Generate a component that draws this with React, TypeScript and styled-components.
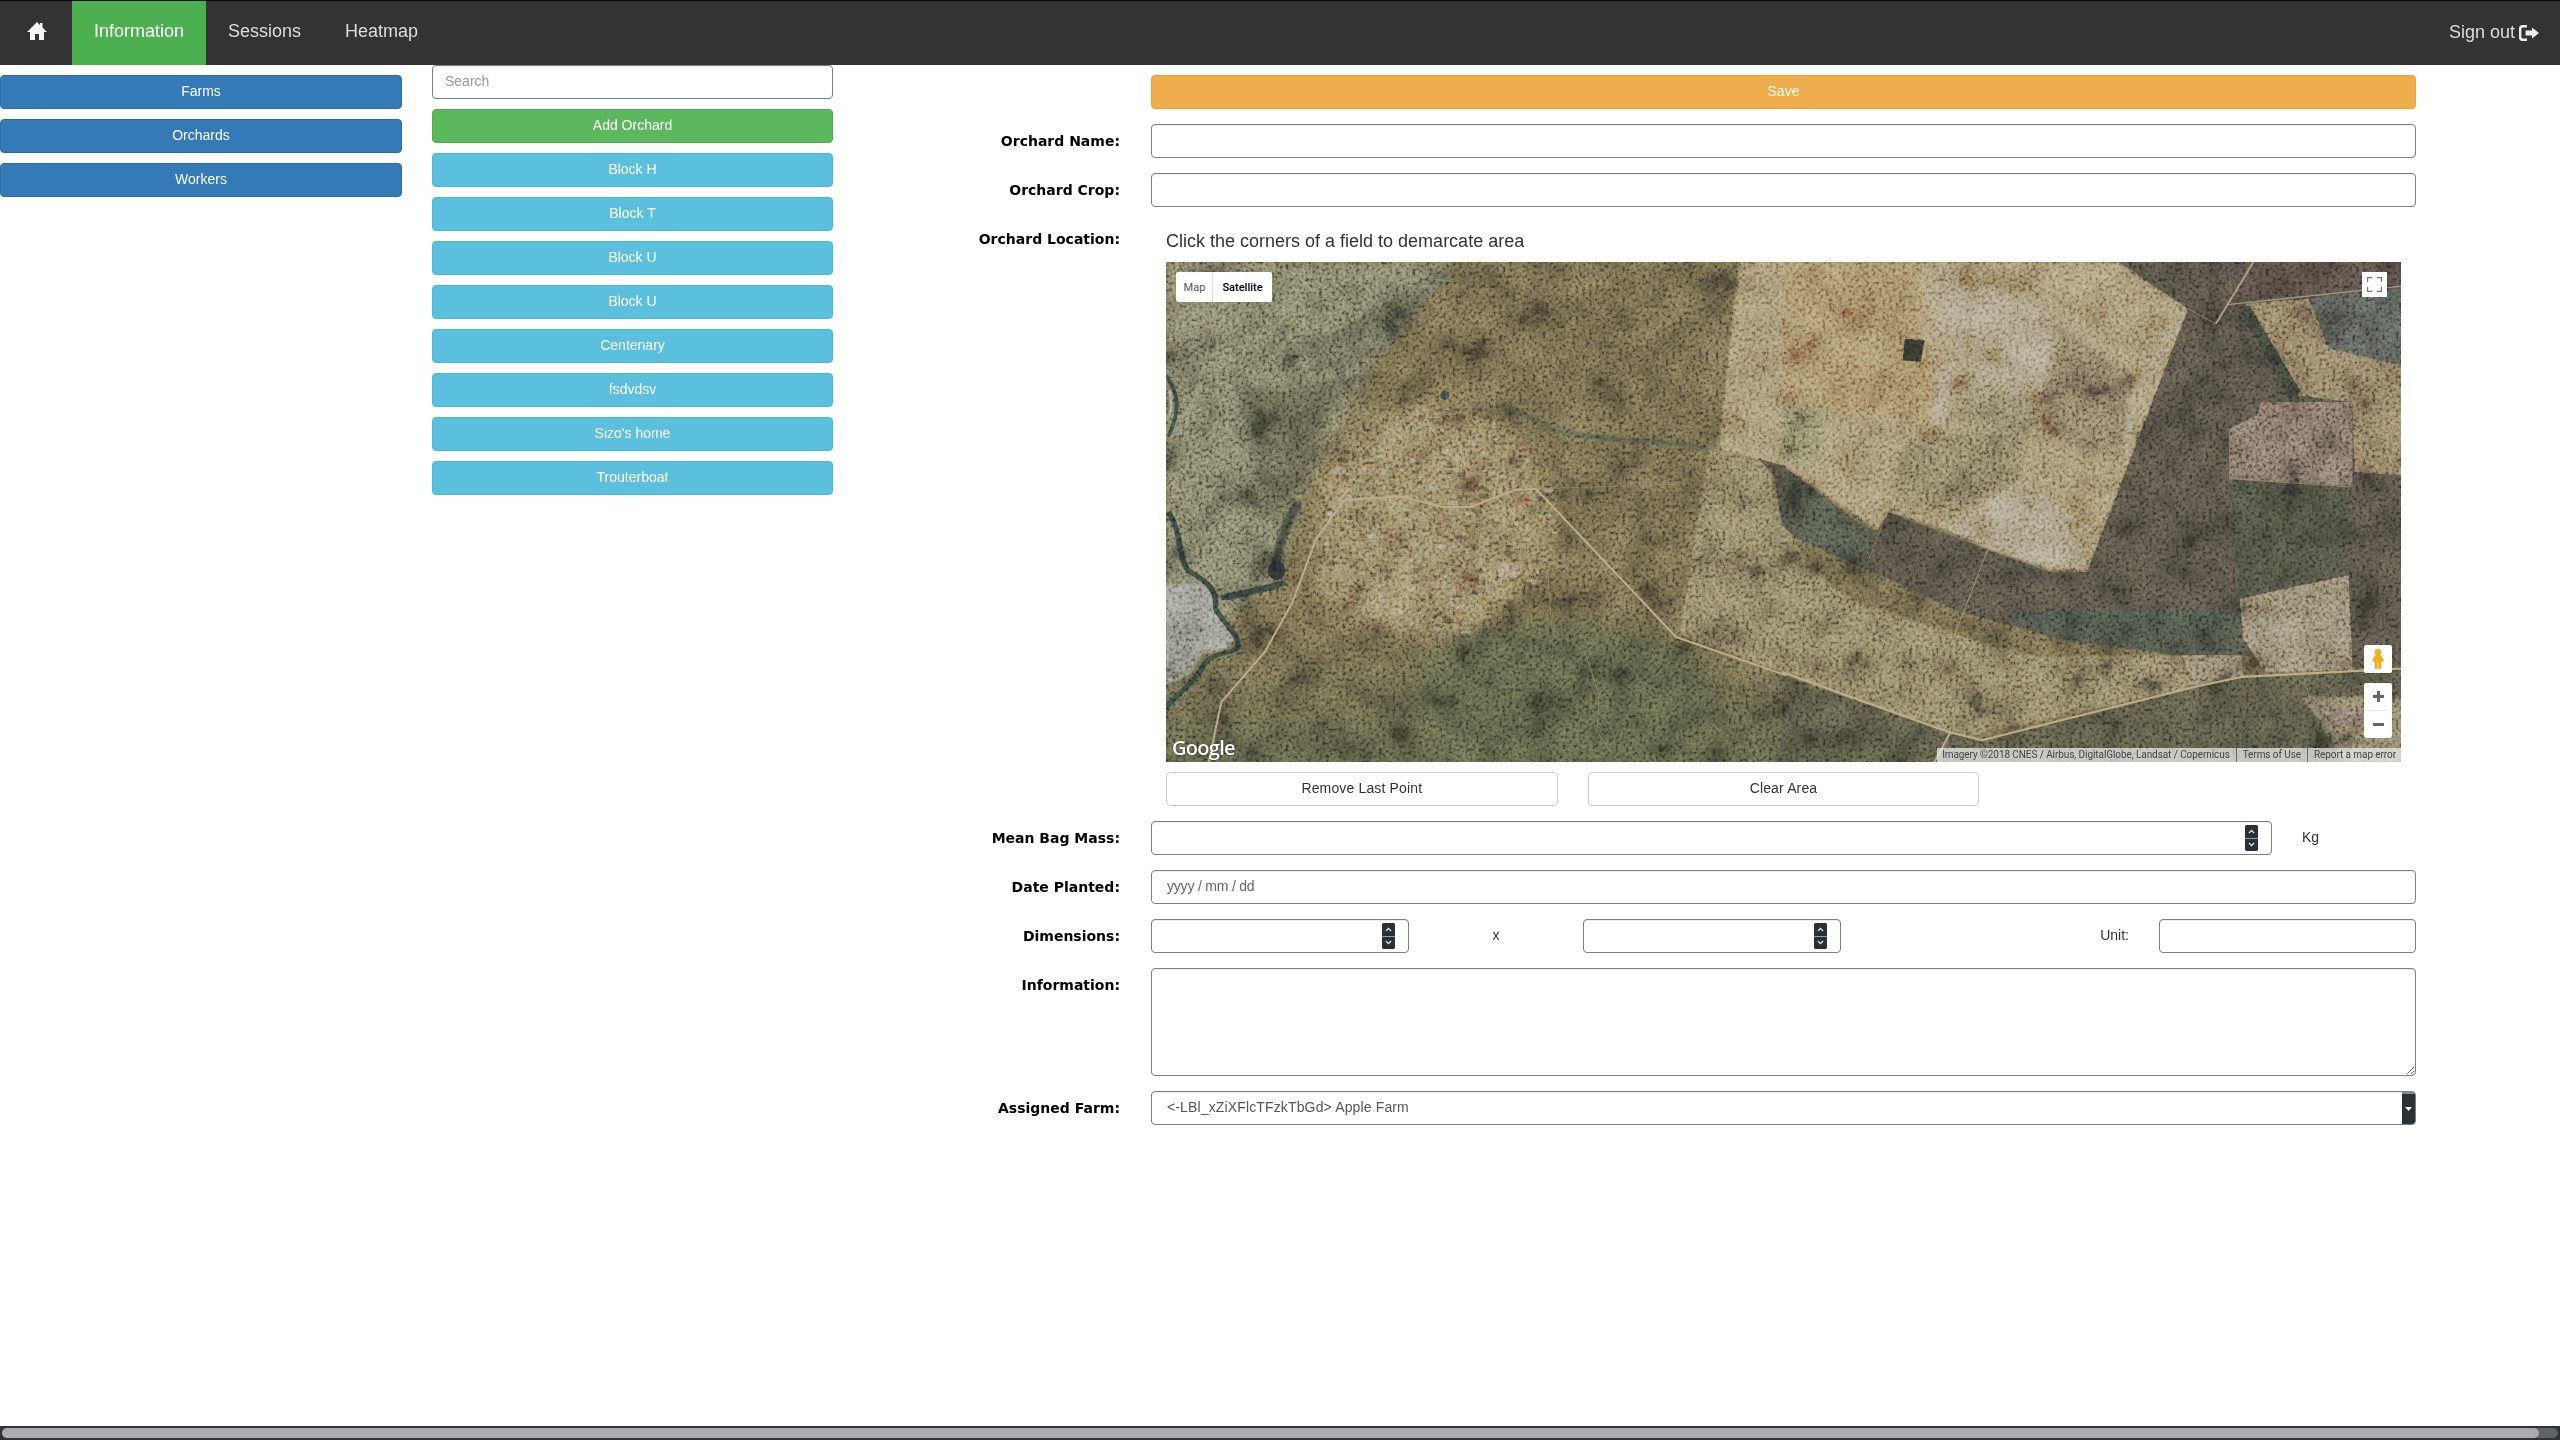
import React from 'react';
import styled, { createGlobalStyle } from 'styled-components';

const GlobalStyle = createGlobalStyle`
  html, body {
    margin: 0;
    padding: 0;
    background: #fff;
  }
  * {
    box-sizing: border-box;
  }
  body {
    font-family: 'Liberation Sans', Arial, sans-serif;
    font-size: 14px;
    color: #333;
  }
`;

const Page = styled.div`
  height: 100vh;
  display: flex;
  flex-direction: column;
  overflow: hidden;
`;

const Navbar = styled.nav`
  height: 65px;
  flex: none;
  display: flex;
  align-items: stretch;
  background: #333;
  border-top: 1px solid #0a0a0a;
`;

const HomeLink = styled.a`
  width: 72px;
  display: flex;
  align-items: center;
  justify-content: center;
  padding-bottom: 4px;
  padding-left: 1px;
`;

const NavTab = styled.a<{ $active?: boolean }>`
  display: flex;
  align-items: center;
  padding: 0 22px 3px;
  font-size: 18px;
  color: ${(p) => (p.$active ? '#fff' : '#ddd')};
  background: ${(p) => (p.$active ? '#4caf50' : 'transparent')};
`;

const SignOut = styled.a`
  margin-left: auto;
  margin-right: 21px;
  display: flex;
  align-items: center;
  gap: 4px;
  font-size: 18px;
  color: #ddd;
  padding-bottom: 1px;
`;

const Body = styled.div`
  flex: 1;
  display: flex;
  min-height: 0;
`;

const SideColumn = styled.div`
  width: 402px;
  flex: none;
  padding-top: 10px;
  display: flex;
  flex-direction: column;
  gap: 10px;
`;

const ListColumn = styled.div`
  width: 401px;
  flex: none;
  margin-left: 30px;
  display: flex;
  flex-direction: column;
  gap: 10px;
`;

const btnColors = {
  primary: ['#337ab7', '#2e6da4', '#fff'],
  success: ['#5cb85c', '#4cae4c', '#fff'],
  info: ['#5bc0de', '#46b8da', '#fff'],
  warning: ['#f0ad4e', '#eea236', '#fff'],
  plain: ['#fff', '#ccc', '#333'],
};

const Button = styled.button<{ $kind: keyof typeof btnColors }>`
  height: 34px;
  width: 100%;
  padding: 0 12px 2px;
  font-family: inherit;
  font-size: 14px;
  letter-spacing: ${(p) => (p.$kind === 'plain' ? '0.15px' : '0')};
  border-radius: 4px;
  border: 1px solid ${(p) => btnColors[p.$kind][1]};
  background: ${(p) => btnColors[p.$kind][0]};
  color: ${(p) => btnColors[p.$kind][2]};
`;

const TextInput = styled.input`
  display: block;
  width: 100%;
  height: 34px;
  padding: 0 15px;
  font-family: inherit;
  font-size: 14px;
  color: #555;
  background: #fff;
  border: 1px solid #808080;
  border-radius: 4px;
  box-shadow: inset 0 1px 1px rgba(0, 0, 0, 0.075);
  outline: none;
  &::placeholder {
    color: #999;
  }
`;

const SearchInput = styled(TextInput)`
  padding: 0 12px 2px;
`;

const DateInput = styled(TextInput)`
  padding-bottom: 2px;
  letter-spacing: -0.2px;
  &::placeholder {
    color: #666;
  }
`;

const FormGrid = styled.div`
  margin-left: 30px;
  padding-top: 10px;
  display: grid;
  grid-template-columns: 257px 1265px;
  column-gap: 31px;
  row-gap: 15px;
  align-content: start;
`;

const Label = styled.label`
  font-family: 'DejaVu Sans', sans-serif;
  font-weight: 700;
  font-size: 14px;
  line-height: 34px;
  text-align: right;
  color: #000;
`;

const LocationLabel = styled(Label)`
  line-height: 17px;
  padding-top: 9px;
`;

const Spacer = styled.div``;

const LocationCell = styled.div`
  padding: 0 15px;
`;

const Hint = styled.div`
  height: 40px;
  line-height: 38px;
  font-size: 18px;
  color: #333;
`;

const MapFrame = styled.div`
  position: relative;
  width: 1235px;
  height: 500px;
  overflow: hidden;
  background: #5f5c42;
  svg {
    display: block;
  }
`;

const GrainRect = styled.rect`
  mix-blend-mode: overlay;
`;

const MapType = styled.div`
  position: absolute;
  top: 10px;
  left: 10px;
  width: 96px;
  height: 30px;
  display: flex;
  background: #fff;
  border-radius: 2px;
  font-family: Roboto, sans-serif;
  font-size: 11px;
  line-height: 31px;
`;

const MapTypeItem = styled.div<{ $on?: boolean }>`
  flex: ${(p) => (p.$on ? 1 : 'none')};
  width: ${(p) => (p.$on ? 'auto' : '37px')};
  text-align: center;
  color: ${(p) => (p.$on ? '#000' : '#565656')};
  font-weight: ${(p) => (p.$on ? 500 : 400)};
  box-shadow: ${(p) => (p.$on ? '-1px 0 1px rgba(0,0,0,.12)' : 'none')};
`;

const MapButton = styled.div`
  position: absolute;
  background: #fff;
  display: flex;
  align-items: center;
  justify-content: center;
  border-radius: 2px;
`;

const FullscreenButton = styled(MapButton)`
  top: 10px;
  right: 14px;
  width: 25px;
  height: 25px;
  border-radius: 0;
`;

const PegmanButton = styled(MapButton)`
  right: 9px;
  top: 383px;
  width: 28px;
  height: 28px;
`;

const ZoomGroup = styled(MapButton)`
  right: 9px;
  top: 421px;
  width: 28px;
  height: 55px;
  flex-direction: column;
`;

const ZoomPart = styled.div`
  flex: 1;
  width: 100%;
  display: flex;
  align-items: center;
  justify-content: center;
`;

const ZoomRule = styled.div`
  width: 18px;
  height: 1px;
  background: #e6e6e6;
`;

const GoogleMark = styled.div`
  position: absolute;
  left: 6px;
  bottom: 1px;
  font-family: 'Open Sans', sans-serif;
  font-weight: 600;
  font-size: 20px;
  letter-spacing: -0.7px;
  color: #fff;
  text-shadow: 0 0 2px rgba(0, 0, 0, 0.6);
`;

const Attribution = styled.div`
  position: absolute;
  right: 0;
  bottom: 0;
  height: 14px;
  display: flex;
  align-items: center;
  padding: 0 5px;
  background: rgba(240, 240, 240, 0.72);
  font-family: Roboto, sans-serif;
  font-size: 10px;
  letter-spacing: -0.08px;
  color: #444;
`;

const AttrItem = styled.span`
  padding: 0 6px;
  border-left: 1px solid #666;
  line-height: 14px;
  &:first-child {
    border-left: none;
    padding-left: 0;
  }
  &:last-child {
    padding-right: 0;
  }
`;

const MapActions = styled.div`
  margin-top: 10px;
  display: grid;
  grid-template-columns: repeat(3, 1fr);
  column-gap: 30px;
`;

const MassRow = styled.div`
  display: grid;
  grid-template-columns: 1121px 144px;
`;

const UnitText = styled.div`
  line-height: 32px;
  padding-left: 30px;
  color: #333;
`;

const DimensionRow = styled.div`
  display: grid;
  grid-template-columns: 258px 174px 258px 318px 257px;
  align-items: stretch;
`;

const TimesText = styled.div`
  line-height: 32px;
  text-align: center;
  color: #333;
`;

const UnitLabel = styled.div`
  line-height: 32px;
  text-align: right;
  padding-right: 30px;
  color: #333;
`;

const NumberBox = styled.div`
  height: 34px;
  display: flex;
  align-items: center;
  justify-content: flex-end;
  padding-right: 13px;
  background: #fff;
  border: 1px solid #808080;
  border-radius: 4px;
  box-shadow: inset 0 1px 1px rgba(0, 0, 0, 0.075);
`;

const Spinner = styled.div`
  width: 13px;
  height: 26px;
  border-radius: 2px;
  overflow: hidden;
  display: flex;
  flex-direction: column;
  gap: 1px;
  background: #9a9da0;
`;

const SpinPart = styled.div`
  flex: 1;
  background: #2b3036;
  display: flex;
  align-items: center;
  justify-content: center;
`;

const InfoArea = styled.textarea`
  display: block;
  width: 100%;
  height: 108px;
  padding: 6px 15px;
  font-family: inherit;
  font-size: 14px;
  border: 1px solid #808080;
  border-radius: 4px;
  box-shadow: inset 0 1px 1px rgba(0, 0, 0, 0.075);
  outline: none;
  resize: vertical;
`;

const SelectBox = styled.div`
  height: 34px;
  display: flex;
  align-items: stretch;
  background: #fff;
  border: 1px solid #808080;
  border-radius: 4px;
  overflow: hidden;
  box-shadow: inset 0 1px 1px rgba(0, 0, 0, 0.075);
`;

const SelectText = styled.div`
  flex: 1;
  padding: 0 15px 2px;
  line-height: 30px;
  letter-spacing: 0.14px;
  color: #555;
`;

const SelectArrow = styled.div`
  width: 13px;
  background: #2b3036;
  border-top: 2px solid #8a8d90;
  display: flex;
  align-items: center;
  justify-content: center;
`;

const ScrollBar = styled.div`
  height: 14px;
  flex: none;
  margin-top: auto;
  padding: 2px;
  background: #2f3336;
`;

const ScrollTrack = styled.div`
  height: 10px;
  border-radius: 5px;
  background: #5f6367;
`;

const ScrollThumb = styled.div`
  height: 10px;
  width: 2537px;
  border-radius: 5px;
  background: #abacb0;
`;

const HomeIcon = () => (
  <svg width="20" height="18" viewBox="0 0 20 18">
    <path d="M10 0 L13 3 V1 H15.5 V5.4 L20 10 H17 V18 H12 V12 H8 V18 H3 V10 H0 Z" fill="#f5f5f5" />
  </svg>
);

const SignOutIcon = () => (
  <svg width="20" height="16" viewBox="0 0 20 16">
    <path
      d="M8 0 H3.5 A3.5 3.5 0 0 0 0 3.5 V12.5 A3.5 3.5 0 0 0 3.5 16 H8 V13.6 H4 A1.6 1.6 0 0 1 2.4 12 V4 A1.6 1.6 0 0 1 4 2.4 H8 Z"
      fill="#eee"
    />
    <path d="M13 2.6 L20 8 L13 13.4 V10.4 H6.5 V5.6 H13 Z" fill="#eee" />
  </svg>
);

const Chevron = ({ up }: { up?: boolean }) => (
  <svg width="7" height="5" viewBox="0 0 7 5">
    <path
      d={up ? 'M1 4 L3.5 1.4 L6 4' : 'M1 1 L3.5 3.6 L6 1'}
      fill="none"
      stroke="#e8e8e8"
      strokeWidth="1.3"
    />
  </svg>
);

const NumberSpinner = () => (
  <Spinner>
    <SpinPart>
      <Chevron up />
    </SpinPart>
    <SpinPart>
      <Chevron />
    </SpinPart>
  </Spinner>
);

// little houses and plots of the village, same pseudo-random run each time
const villageSpots = (() => {
  const out: { x: number; y: number; w: number; h: number; c: string }[] = [];
  const colors = ['#b09a76', '#3f3e2c', '#9c6648', '#bcae90', '#5f6446', '#45442f', '#a07a58'];
  let seed = 7;
  const rnd = () => {
    seed = (seed * 16807) % 2147483647;
    return seed / 2147483647;
  };
  for (let i = 0; i < 760; i++) {
    const x = 380 + rnd() * 600;
    const y = 430 + rnd() * 680;
    const inside =
      ((x - 680) * (x - 680)) / (300 * 300) + ((y - 770) * (y - 770)) / (340 * 340) < 1;
    if (!inside) continue;
    out.push({ x, y, w: 5 + rnd() * 18, h: 4 + rnd() * 11, c: colors[Math.floor(rnd() * colors.length)] });
  }
  return out;
})();

const Road = ({ d, w = 2.4, c = '#bfac88', o = 1 }: { d: string; w?: number; c?: string; o?: number }) => (
  <path d={d} fill="none" stroke={c} strokeWidth={w} opacity={o} vectorEffect="non-scaling-stroke" strokeLinejoin="round" />
);

const LEFT_CROP = 'scale(0.3954 0.3333)';
const RIGHT_CROP = 'translate(616 0) scale(0.3962 0.3333)';

const SatelliteImage = () => (
  <svg width="1235" height="500" viewBox="0 0 1235 500">
    <defs>
      <filter id="soft30" x="-20%" y="-20%" width="140%" height="140%">
        <feGaussianBlur stdDeviation="30" />
      </filter>
      <filter id="soft12" x="-20%" y="-20%" width="140%" height="140%">
        <feGaussianBlur stdDeviation="12" />
      </filter>
      <filter id="soft4" x="-10%" y="-10%" width="120%" height="120%">
        <feGaussianBlur stdDeviation="4" />
      </filter>
      <filter id="soft1" x="-5%" y="-5%" width="110%" height="110%">
        <feGaussianBlur stdDeviation="1.2" />
      </filter>
      <filter id="grain" x="0" y="0" width="100%" height="100%">
        <feTurbulence type="fractalNoise" baseFrequency="0.3" numOctaves="3" seed="4" />
        <feColorMatrix values="2.2 0 0 0 -0.6  2.2 0 0 0 -0.6  2.2 0 0 0 -0.6  0 0 0 0 1" />
      </filter>
      <filter id="mottle" x="0" y="0" width="100%" height="100%">
        <feTurbulence type="fractalNoise" baseFrequency="0.028" numOctaves="4" seed="11" />
        <feColorMatrix values="1.8 0 0 0 -0.4  1.8 0 0 0 -0.4  1.8 0 0 0 -0.4  0 0 0 0 1" />
      </filter>
      <linearGradient id="lowerFade" x1="0" y1="0" x2="0" y2="1">
        <stop offset="0" stopColor="#4e5039" stopOpacity="0" />
        <stop offset="1" stopColor="#4e5039" stopOpacity="1" />
      </linearGradient>
    </defs>

    <rect width="1235" height="500" fill="#62593e" />

    <g transform={LEFT_CROP}>
      {/* lower olive ground */}
      <rect x="0" y="1100" width="1568" height="400" fill="url(#lowerFade)" />
      {/* grey bush on the left */}
      <polygon
        points="0,0 720,0 560,220 440,480 340,720 280,950 120,1100 0,1300"
        fill="#6e6d57"
        filter="url(#soft12)"
      />
      <polygon
        points="200,380 440,360 400,560 330,720 280,800 230,640"
        fill="#565643"
        filter="url(#soft12)"
      />
      <polygon
        points="370,250 560,120 680,20 720,40 560,260 440,330 360,320"
        fill="#5c5c49"
        filter="url(#soft4)"
      />
      {/* village clearing */}
      <ellipse cx="670" cy="770" rx="290" ry="340" fill="#8a7856" filter="url(#soft30)" />
      <ellipse cx="560" cy="900" rx="170" ry="200" fill="#8c7a58" filter="url(#soft30)" />
      <ellipse cx="1000" cy="1300" rx="400" ry="220" fill="#4e5039" filter="url(#soft30)" />
      {/* pale river bed */}
      <polygon
        points="0,970 115,965 130,1070 178,1130 150,1160 90,1170 60,1240 0,1265"
        fill="#909184"
        filter="url(#soft4)"
      />
      <path
        d="M5,750 C40,800 30,900 60,930 C110,960 130,990 125,1040 C150,1090 190,1120 180,1160 C150,1180 110,1170 90,1220 C60,1280 20,1300 0,1340"
        fill="none"
        stroke="#2c3732"
        strokeWidth="14"
        filter="url(#soft1)"
      />
      <path d="M140,1010 C200,990 270,980 300,960" fill="none" stroke="#2c3732" strokeWidth="20" filter="url(#soft1)" />
      <path
        d="M272,930 C285,860 300,790 335,720"
        fill="none"
        stroke="#2d352c"
        strokeWidth="24"
        filter="url(#soft4)"
      />
      <ellipse cx="280" cy="925" rx="22" ry="30" fill="#222a2a" />
      <path d="M0,340 C30,390 40,440 5,525" fill="none" stroke="#2c3732" strokeWidth="10" />
      <path d="M8,385 C16,410 16,440 8,460" fill="none" stroke="#9c9c90" strokeWidth="6" />
      <path
        d="M840,420 C880,440 910,460 960,490 C1040,540 1180,520 1370,560"
        fill="none"
        stroke="#3c4438"
        strokeWidth="14"
        opacity="0.7"
        filter="url(#soft4)"
      />
      <ellipse cx="705" cy="400" rx="12" ry="14" fill="#2c3a30" />
      {villageSpots.map((s, i) => (
        <rect key={i} x={s.x} y={s.y} width={s.w} height={s.h} fill={s.c} opacity="0.55" />
      ))}
      <polygon points="880,720 930,690 910,730" fill="#a85a40" opacity="0.7" />
      <rect x="840" y="905" width="50" height="40" fill="#ac8c6e" opacity="0.7" />
    </g>

    {/* tan fields in the middle, both crops meet at x=616 */}
    <polygon
      points="573,0 951,0 1022,47 921,310 723,250 711,267 616,203 600,200 553,187"
      fill="#9f8863"
      filter="url(#soft1)"
    />
    <polygon
      points="513,372 544,186 553,187 600,200 620,262 650,312 690,340 800,375 870,395 1012,393 1028,425 820,470 786,478 616,410"
      fill="#7a6f52"
      filter="url(#soft1)"
    />

    <g transform={RIGHT_CROP}>
      {/* dark woodland */}
      <polygon
        points="1025,140 770,930 680,930 520,860 270,750 240,810 190,780 0,610 -60,590 -20,640 0,790 40,830 210,920 450,1050 700,1130 1000,1180 1160,1180 1565,1230 1565,640 1565,0 850,0"
        fill="#474337"
        filter="url(#soft1)"
      />
      <polygon points="0,620 190,780 240,810 210,920 40,830 0,790" fill="#42463b" filter="url(#soft1)" />
      <polygon points="700,1040 1160,1040 1160,1180 1000,1180 700,1130 560,1060" fill="#3f453a" filter="url(#soft4)" />
      <polygon points="1130,660 1430,680 1430,930 1150,1000" fill="#3f4236" filter="url(#soft4)" />
      <polygon points="1140,0 1565,0 1565,70 1135,120" fill="#463c36" />
      <polygon points="1330,110 1565,80 1565,300 1410,295 1370,250" fill="#4c5048" filter="url(#soft1)" />
      <polygon
        points="1170,125 1330,110 1380,260 1565,310 1565,640 1445,630 1440,420 1300,400 1230,270"
        fill="#7f6d52"
        filter="url(#soft1)"
      />
      <polygon points="1130,500 1200,460 1210,420 1440,420 1440,672 1130,650" fill="#6f6256" />
      <polygon points="1155,1010 1430,940 1440,1225 1220,1230 1165,1130" fill="#857a62" filter="url(#soft1)" />
      <polygon points="1010,1180 1160,1180 1165,1245 1040,1270" fill="#827660" />
      <polygon points="0,1240 420,1410 505,1435 1160,1245 1565,1225 1565,1500 0,1500" fill="#4a4938" />
      <polygon points="1310,1300 1565,1310 1565,1500 1420,1500" fill="#786e58" filter="url(#soft4)" />
      <rect x="1380" y="1340" width="90" height="50" fill="#746558" />
      {/* pale and mottled parts of the big field */}
      <polygon points="0,0 340,0 380,480 0,430" fill="#a07f58" filter="url(#soft12)" />
      <polygon points="400,20 720,180 700,400 620,420 500,370 400,200" fill="#aa9a78" filter="url(#soft12)" />
      <polygon points="700,180 890,340 860,600 700,550 660,420" fill="#776b52" filter="url(#soft12)" />
      <polygon points="300,540 620,480 600,660 420,760 290,720" fill="#7a6f54" filter="url(#soft12)" />
      <polygon points="460,330 640,430 620,520 460,500" fill="#83785c" filter="url(#soft12)" />
      <polygon points="420,800 600,650 780,800 760,920 680,920 520,860" fill="#a99a78" filter="url(#soft4)" />
      <polygon points="0,430 110,440 90,600 0,590" fill="#84805f" filter="url(#soft12)" />
      <polygon points="870,420 1000,150 1020,145 900,430 865,610" fill="#a59472" filter="url(#soft4)" />
      <polygon points="310,230 360,235 350,300 305,295" fill="#2c3128" />
      <polygon points="400,310 440,300 410,490 375,480" fill="#af9a7a" filter="url(#soft1)" />
      <polygon points="1155,140 1180,130 1310,390 1280,410" fill="#31382f" filter="url(#soft1)" />
    </g>

    <GrainRect width="1235" height="500" filter="url(#mottle)" opacity="0.3" />
    <GrainRect width="1235" height="500" filter="url(#grain)" opacity="0.42" />
    {/* takes the edge off the colours, the photo is greyer than the flat fills */}
    <rect width="1235" height="500" fill="#5c5c54" opacity="0.16" />

    <g transform={LEFT_CROP}>
      <Road
        d="M108,1500 L140,1320 L250,1170 L320,1020 L380,830 L450,715 L590,703 L700,735 L770,735 L880,685 L935,680 L1290,1125 L1568,1240"
        w={2}
      />
      <Road d="M135,130 L50,500 L5,750" w={1.1} c="#b0a488" o={0.7} />
      <Road d="M10,170 L125,200" w={1.2} c="#b0a488" o={0.6} />
      <Road d="M945,680 L1345,665" w={1} c="#a5946f" o={0.6} />
      <Road d="M965,920 L975,1100 L1060,1170 L1095,1300 L1090,1410 L1145,1500" w={1} c="#a5946f" o={0.65} />
      <Road d="M520,370 L440,530" w={2.4} c="#8f8e78" o={0.5} />
      <Road d="M770,740 L780,840" w={1} c="#b59a74" o={0.6} />
      <Road d="M600,640 L590,705" w={1} c="#b59a74" o={0.6} />
    </g>
    <g transform={RIGHT_CROP}>
      <Road d="M0,1230 L420,1410 L505,1435 L1040,1275 L1160,1245 L1565,1220" w={2.2} />
      <Road d="M425,1410 L385,1500" w={2} />
      <Road d="M520,860 L355,1370" w={1.1} c="#b0a180" o={0.75} />
      <Road d="M1190,0 L1095,185" w={1.8} c="#aea38a" />
      <Road d="M1125,128 L1565,72" w={1.4} c="#a09880" />
      <Road d="M1025,140 L1095,185" w={1.1} c="#a09880" o={0.6} />
      <Road d="M1130,500 L1130,650 L1440,675" w={1.1} c="#a09880" o={0.7} />
      <Road d="M270,750 L520,860 L680,930" w={1.1} c="#9a8f70" o={0.6} />
      <Road d="M265,750 L215,905" w={1} c="#a09578" o={0.6} />
      <Road d="M1315,1240 L1340,1340 L1420,1460" w={1} c="#a09880" o={0.6} />
    </g>
  </svg>
);

const SatelliteMap = () => (
  <MapFrame>
    <SatelliteImage />
    <MapType>
      <MapTypeItem>Map</MapTypeItem>
      <MapTypeItem $on>Satellite</MapTypeItem>
    </MapType>
    <FullscreenButton>
      <svg width="15" height="15" viewBox="0 0 15 15">
        <path
          d="M0 5 V0 H5 M10 0 H15 V5 M15 10 V15 H10 M5 15 H0 V10"
          fill="none"
          stroke="#757575"
          strokeWidth="2.4"
        />
      </svg>
    </FullscreenButton>
    <PegmanButton>
      <svg width="12" height="20" viewBox="0 0 12 20">
        <circle cx="6" cy="3.2" r="3" fill="#fbb313" stroke="#c98a10" strokeWidth="0.5" />
        <path
          d="M3 6.4 H9 L11.6 12 L10 12.6 L9 10 V19.6 H6.6 V13 H5.4 V19.6 H3 V10 L2 12.6 L0.4 12 Z"
          fill="#fbb313"
          stroke="#c98a10"
          strokeWidth="0.4"
        />
      </svg>
    </PegmanButton>
    <ZoomGroup>
      <ZoomPart>
        <svg width="11" height="11" viewBox="0 0 11 11">
          <path d="M4 0 H7 V4 H11 V7 H7 V11 H4 V7 H0 V4 H4 Z" fill="#666" />
        </svg>
      </ZoomPart>
      <ZoomRule />
      <ZoomPart>
        <svg width="11" height="3" viewBox="0 0 11 3">
          <rect width="11" height="3" fill="#666" />
        </svg>
      </ZoomPart>
    </ZoomGroup>
    <GoogleMark>Google</GoogleMark>
    <Attribution>
      <AttrItem>Imagery ©2018 CNES / Airbus, DigitalGlobe, Landsat / Copernicus</AttrItem>
      <AttrItem>Terms of Use</AttrItem>
      <AttrItem>Report a map error</AttrItem>
    </Attribution>
  </MapFrame>
);

const orchards = ['Block H', 'Block T', 'Block U', 'Block U', 'Centenary', 'fsdvdsv', "Sizo's home", 'Trouterboat'];

export default function App() {
  return (
    <Page>
      <GlobalStyle />
      <Navbar>
        <HomeLink>
          <HomeIcon />
        </HomeLink>
        <NavTab $active>Information</NavTab>
        <NavTab>Sessions</NavTab>
        <NavTab>Heatmap</NavTab>
        <SignOut>
          Sign out
          <SignOutIcon />
        </SignOut>
      </Navbar>
      <Body>
        <SideColumn>
          <Button $kind="primary">Farms</Button>
          <Button $kind="primary">Orchards</Button>
          <Button $kind="primary">Workers</Button>
        </SideColumn>
        <ListColumn>
          <SearchInput placeholder="Search" />
          <Button $kind="success">Add Orchard</Button>
          {orchards.map((name, i) => (
            <Button $kind="info" key={i}>
              {name}
            </Button>
          ))}
        </ListColumn>
        <FormGrid>
          <Spacer />
          <Button $kind="warning">Save</Button>

          <Label>Orchard Name:</Label>
          <TextInput />

          <Label>Orchard Crop:</Label>
          <TextInput />

          <LocationLabel>Orchard Location:</LocationLabel>
          <LocationCell>
            <Hint>Click the corners of a field to demarcate area</Hint>
            <SatelliteMap />
            <MapActions>
              <Button $kind="plain">Remove Last Point</Button>
              <Button $kind="plain">Clear Area</Button>
            </MapActions>
          </LocationCell>

          <Label>Mean Bag Mass:</Label>
          <MassRow>
            <NumberBox>
              <NumberSpinner />
            </NumberBox>
            <UnitText>Kg</UnitText>
          </MassRow>

          <Label>Date Planted:</Label>
          <DateInput placeholder="yyyy / mm / dd" />

          <Label>Dimensions:</Label>
          <DimensionRow>
            <NumberBox>
              <NumberSpinner />
            </NumberBox>
            <TimesText>x</TimesText>
            <NumberBox>
              <NumberSpinner />
            </NumberBox>
            <UnitLabel>Unit:</UnitLabel>
            <TextInput />
          </DimensionRow>

          <Label>Information:</Label>
          <InfoArea />

          <Label>Assigned Farm:</Label>
          <SelectBox>
            <SelectText>{'<-LBl_xZiXFlcTFzkTbGd> Apple Farm'}</SelectText>
            <SelectArrow>
              <svg width="7" height="4" viewBox="0 0 7 4">
                <path d="M0 0 H7 L3.5 4 Z" fill="#fff" />
              </svg>
            </SelectArrow>
          </SelectBox>
        </FormGrid>
      </Body>
      <ScrollBar>
        <ScrollTrack>
          <ScrollThumb />
        </ScrollTrack>
      </ScrollBar>
    </Page>
  );
}
